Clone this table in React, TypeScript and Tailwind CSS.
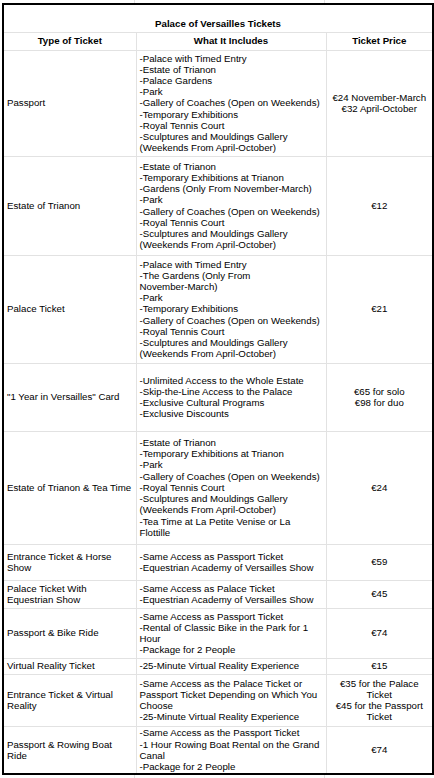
import type { ReactNode } from "react";

const rows: { type: string; items: ReactNode[]; price: string[]; h: string }[] = [
	{
		type: "Passport",
		items: [
			"-Palace with Timed Entry",
			"-Estate of Trianon",
			"-Palace Gardens",
			"-Park",
			"-Gallery of Coaches (Open on Weekends)",
			"-Temporary Exhibitions",
			"-Royal Tennis Court",
			"-Sculptures and Mouldings Gallery (Weekends From April-October)",
		],
		price: ["€24 November-March", "€32 April-October"],
		h: "h-[106px]",
	},
	{
		type: "Estate of Trianon",
		items: [
			"-Estate of Trianon",
			"-Temporary Exhibitions at Trianon",
			"-Gardens (Only From November-March)",
			"-Park",
			"-Gallery of Coaches (Open on Weekends)",
			"-Royal Tennis Court",
			"-Sculptures and Mouldings Gallery (Weekends From April-October)",
		],
		price: ["€12"],
		h: "h-[99px]",
	},
	{
		type: "Palace Ticket",
		items: [
			"-Palace with Timed Entry",
			<>
				-The Gardens (Only From{" "}
				<span className="whitespace-nowrap">November-March)</span>
			</>,
			"-Park",
			"-Temporary Exhibitions",
			"-Gallery of Coaches (Open on Weekends)",
			"-Royal Tennis Court",
			"-Sculptures and Mouldings Gallery (Weekends From April-October)",
		],
		price: ["€21"],
		h: "h-[108px]",
	},
	{
		type: "\"1 Year in Versailles\" Card",
		items: [
			"-Unlimited Access to the Whole Estate",
			"-Skip-the-Line Access to the Palace",
			"-Exclusive Cultural Programs",
			"-Exclusive Discounts",
		],
		price: ["€65 for solo", "€98 for duo"],
		h: "h-[68px]",
	},
	{
		type: "Estate of Trianon & Tea Time",
		items: [
			"-Estate of Trianon",
			"-Temporary Exhibitions at Trianon",
			"-Park",
			"-Gallery of Coaches (Open on Weekends)",
			"-Royal Tennis Court",
			"-Sculptures and Mouldings Gallery (Weekends From April-October)",
			"-Tea Time at La Petite Venise or La Flottille",
		],
		price: ["€24"],
		h: "h-[113px]",
	},
	{
		type: "Entrance Ticket & Horse Show",
		items: ["-Same Access as Passport Ticket", "-Equestrian Academy of Versailles Show"],
		price: ["€59"],
		h: "h-[36px]",
	},
	{
		type: "Palace Ticket With Equestrian Show",
		items: ["-Same Access as Palace Ticket", "-Equestrian Academy of Versailles Show"],
		price: ["€45"],
		h: "h-[28px]",
	},
	{
		type: "Passport & Bike Ride",
		items: [
			"-Same Access as Passport Ticket",
			"-Rental of Classic Bike in the Park for 1 Hour",
			"-Package for 2 People",
		],
		price: ["€74"],
		h: "h-[50px]",
	},
	{
		type: "Virtual Reality Ticket",
		items: ["-25-Minute Virtual Reality Experience"],
		price: ["€15"],
		h: "h-[16px]",
	},
	{
		type: "Entrance Ticket & Virtual Reality",
		items: [
			"-Same Access as the Palace Ticket or Passport Ticket Depending on Which You Choose",
			"-25-Minute Virtual Reality Experience",
		],
		price: ["€35 for the Palace Ticket", "€45 for the Passport Ticket"],
		h: "h-[52px]",
	},
	{
		type: "Passport & Rowing Boat Ride",
		items: [
			"-Same Access as the Passport Ticket",
			"-1 Hour Rowing Boat Rental on the Grand Canal",
			"-Package for 2 People",
		],
		price: ["€74"],
		h: "h-[48px]",
	},
];

function GridStrip({ className }: { className: string }) {
	return (
		<div className={`flex ${className}`}>
			<div className="w-[135px] border-r border-[#e2e2e2]" />
			<div className="w-[190px] border-r border-[#e2e2e2]" />
			<div className="flex-1" />
		</div>
	);
}

export default function App() {
	return (
		<div
			className="flex h-[778px] w-[434px] flex-col overflow-hidden bg-white text-[9.7px] leading-[11.2px] text-black"
			style={{ fontFamily: '"Liberation Sans", Arial, sans-serif' }}
		>
			<GridStrip className="h-[3px] shrink-0" />
			<div className="pl-[2px]">
				<table className="w-[430px] table-fixed border-collapse border-2 border-black">
					<colgroup>
						<col className="w-[133px]" />
						<col className="w-[190px]" />
						<col className="w-[107px]" />
					</colgroup>
					<thead>
						<tr className="h-[28px]">
							<th
								colSpan={3}
								className="border-b border-[#e2e2e2] px-[3px] pb-[2px] text-center align-bottom font-bold"
							>
								Palace of Versailles Tickets
							</th>
						</tr>
						<tr className="h-[18px]">
							<th className="border border-[#e2e2e2] px-[3px] text-center align-middle font-bold">
								Type of Ticket
							</th>
							<th className="border border-[#e2e2e2] px-[3px] text-center align-middle font-bold">
								What It Includes
							</th>
							<th className="border border-[#e2e2e2] px-[3px] text-center align-middle font-bold">
								Ticket Price
							</th>
						</tr>
					</thead>
					<tbody>
						{rows.map((row) => (
							<tr key={row.type} className={row.h}>
								<td className="border border-[#e2e2e2] px-[3px] py-0 text-left align-middle">
									{row.type}
								</td>
								<td className="border border-[#e2e2e2] px-[3px] py-0 text-left align-middle">
									{row.items.map((item, i) => (
										<div key={i}>{item}</div>
									))}
								</td>
								<td className="border border-[#e2e2e2] px-[3px] py-0 text-center align-middle">
									{row.price.map((p) => (
										<div key={p}>{p}</div>
									))}
								</td>
							</tr>
						))}
					</tbody>
				</table>
			</div>
			<GridStrip className="flex-1" />
		</div>
	);
}
